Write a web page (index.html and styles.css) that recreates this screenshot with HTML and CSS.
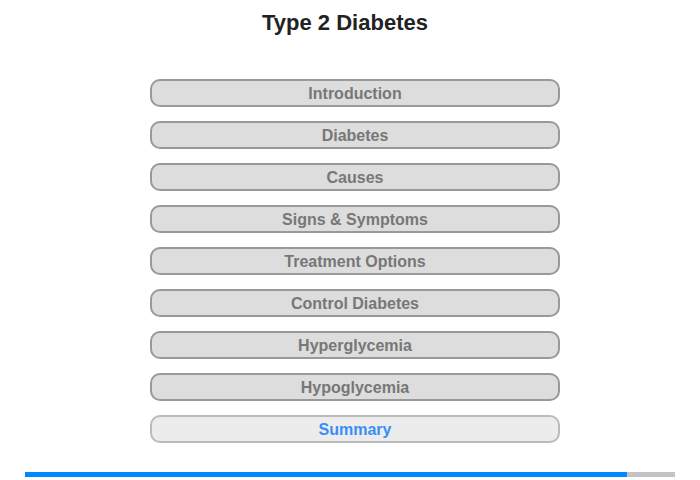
FILE: index.html
```html
<!DOCTYPE html>
<html lang="en">
<head>
  <meta charset="UTF-8" />
  <title>Type 2 Diabetes</title>
  <link rel="stylesheet" href="styles.css">
</head>
<body>
  <h1 class="title">Type 2 Diabetes</h1>

  <nav class="menu">
    <a class="menu-btn">Introduction</a>
    <a class="menu-btn">Diabetes</a>
    <a class="menu-btn">Causes</a>
    <a class="menu-btn">Signs &amp; Symptoms</a>
    <a class="menu-btn">Treatment Options</a>
    <a class="menu-btn">Control Diabetes</a>
    <a class="menu-btn">Hyperglycemia</a>
    <a class="menu-btn">Hypoglycemia</a>
    <a class="menu-btn current">Summary</a>
  </nav>

  <div class="progress">
    <div class="progress-fill" style="width: 92.6%"></div>
  </div>
</body>
</html>
```

FILE: styles.css
```css
* {
  box-sizing: border-box;
}
body {
  margin: 0;
  font-family: 'Liberation Sans', Arial, sans-serif;
  background: #fff;
  color: #222;
  width: 700px;
  height: 480px;
}
.title {
  margin: 0;
  padding: 10px 10px 0 0;
  font-size: 22px;
  line-height: 26px;
  font-weight: bold;
  text-align: center;
  color: #222;
}
.menu {
  display: flex;
  flex-direction: column;
  gap: 14px;
  width: 410px;
  margin: 43px 0 0 150px;
}
.menu-btn {
  display: block;
  height: 28px;
  padding-top: 1px;
  line-height: 24px;
  border: 2px solid #999;
  border-radius: 10px;
  background: #ddd;
  color: #777;
  font-size: 16px;
  font-weight: bold;
  text-align: center;
  cursor: pointer;
}
.menu-btn.current {
  background: #ececec;
  border-color: #bbb;
  color: #3a8ef5;
}
.progress {
  margin: 29px 0 0 25px;
  width: 650px;
  height: 5px;
  background: #c4c4c4;
}
.progress-fill {
  height: 100%;
  background: #0088ff;
}
```
